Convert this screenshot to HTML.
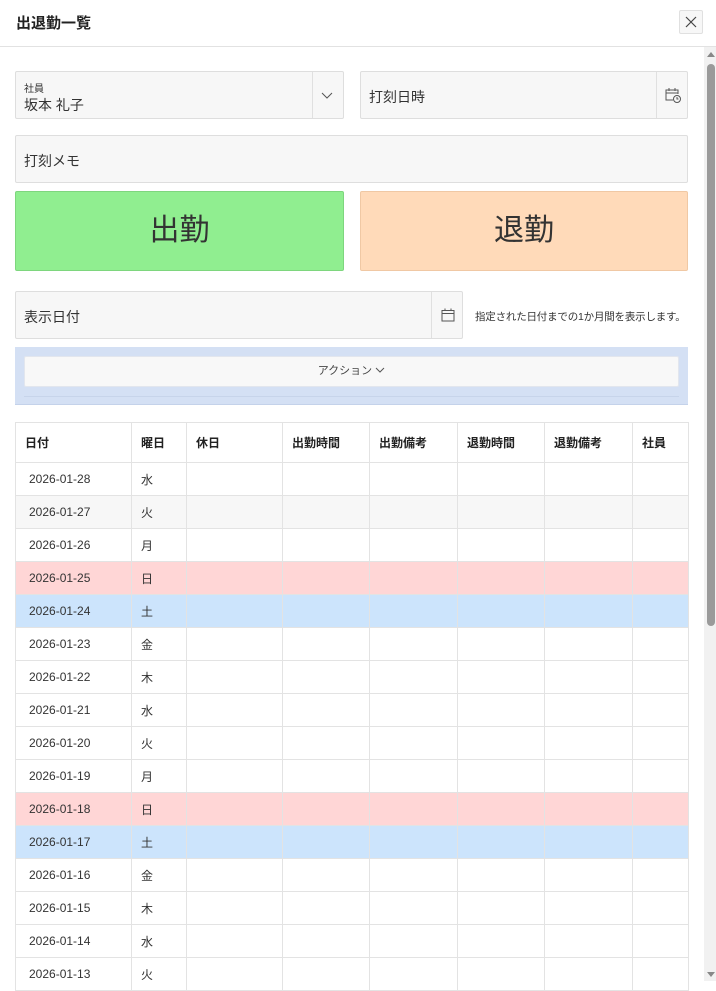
<!DOCTYPE html>
<html><head><meta charset="utf-8"><style>
*{box-sizing:border-box;margin:0;padding:0}
body{width:716px;height:981px;overflow:hidden;background:#fff;font-family:"Liberation Sans","Noto Sans CJK JP",sans-serif;color:#262626;position:relative}
.abs{position:absolute}
.box{position:absolute;background:#f7f7f7;border:1px solid #dedede;border-radius:2px}
.lbl{font-size:14px;color:#333}
table{border-collapse:collapse;position:absolute;left:15px;top:422px;width:673px;font-size:12px;table-layout:fixed}
td,th{border:1px solid #e3e3e3;height:33px;padding:0 9px;text-align:left;font-weight:normal;color:#333}
th{height:40px;font-weight:bold;font-size:12px;color:#222;border-top:1px solid #e3e3e3}
td:first-child{padding-left:13px}
tr.s td{background:#ffd6d6}tr.b td{background:#cce4fc}tr.g td{background:#f7f7f7}
</style></head><body>
<div class="abs" style="left:16px;top:12px;font-size:15px;font-weight:bold;color:#222">出退勤一覧</div>
<div class="abs" style="left:679px;top:10px;width:24px;height:24px;border:1px solid #e0e0e0;background:#f7f7f7;border-radius:2px">
<svg width="22" height="22" viewBox="0 0 22 22"><path d="M6 6L16 16M16 6L6 16" stroke="#444" stroke-width="1.2"/></svg></div>
<div class="abs" style="left:0;top:46px;width:716px;height:1px;background:#e2e2e2"></div>
<div class="abs" style="left:704px;top:47px;width:12px;height:934px;background:#f1f1f1"></div>
<div class="abs" style="left:707px;top:64px;width:8px;height:562px;background:#9a9a9a;border-radius:4px"></div>
<svg class="abs" style="left:706px;top:50px" width="10" height="8"><path d="M1 7L5 2L9 7Z" fill="#888"/></svg>
<svg class="abs" style="left:706px;top:971px" width="10" height="8"><path d="M1 1L5 6L9 1Z" fill="#888"/></svg>

<div class="box" style="left:15px;top:71px;width:329px;height:48px">
<div class="abs" style="left:8px;top:8px;font-size:10px;color:#333">社員</div>
<div class="abs lbl" style="left:8px;top:23px">坂本 礼子</div>
<div class="abs" style="left:296px;top:0;width:1px;height:46px;background:#e0e0e0"></div>
<svg class="abs" style="left:305px;top:18px" width="12" height="10"><path d="M1 3L6 8L11 3" stroke="#555" fill="none"/></svg>
</div>
<div class="box" style="left:360px;top:71px;width:328px;height:48px">
<div class="abs lbl" style="left:8px;top:15px">打刻日時</div>
<div class="abs" style="left:295px;top:0;width:1px;height:46px;background:#e0e0e0"></div>
<svg class="abs" style="left:303px;top:14px" width="18" height="18" viewBox="0 0 18 18"><path d="M9 14H2V4H14V8M2 7H14M5 2V5M11 2V5" stroke="#555" fill="none"/><circle cx="13" cy="13" r="3.5" stroke="#555" fill="none"/><path d="M13 11V13H14.5" stroke="#555" fill="none"/></svg>
</div>
<div class="box" style="left:15px;top:135px;width:673px;height:48px">
<div class="abs lbl" style="left:8px;top:15px">打刻メモ</div></div>
<div class="abs" style="left:15px;top:191px;width:329px;height:80px;background:#90ee90;border:1px solid #7ed67e;border-radius:2px;font-size:30px;color:#333;text-align:center;line-height:78px">出勤</div>
<div class="abs" style="left:360px;top:191px;width:328px;height:80px;background:#ffdab9;border:1px solid #f0c8a4;border-radius:2px;font-size:30px;color:#333;text-align:center;line-height:78px">退勤</div>

<div class="box" style="left:15px;top:291px;width:448px;height:48px">
<div class="abs lbl" style="left:8px;top:15px">表示日付</div>
<div class="abs" style="left:415px;top:0;width:1px;height:46px;background:#e0e0e0"></div>
<svg class="abs" style="left:424px;top:15px" width="16" height="16" viewBox="0 0 16 16"><path d="M2 3.5H14V14H2ZM2 6.5H14M5 1.5V4M11 1.5V4" stroke="#555" fill="none"/></svg>
</div>
<div class="abs" style="left:475px;top:309px;font-size:10.5px;color:#333;letter-spacing:-0.2px">指定された日付までの1か月間を表示します。</div>

<div class="abs" style="left:15px;top:347px;width:673px;height:58px;background:#d4e0f4;border-bottom:1px solid #c4d2ea"></div>
<div class="abs" style="left:24px;top:356px;width:655px;height:31px;background:#f8f8f8;border:1px solid #e2e6ee;border-radius:2px;font-size:11px;color:#444;text-align:center;line-height:29px">アクション <svg width="10" height="8"><path d="M1 2L5 6L9 2" stroke="#555" fill="none"/></svg></div>
<div class="abs" style="left:24px;top:396px;width:655px;height:1px;background:#c7d4ea"></div>

<table>
<colgroup><col style="width:116px"><col style="width:55px"><col style="width:96px"><col style="width:87px"><col style="width:88px"><col style="width:87px"><col style="width:88px"><col style="width:56px"></colgroup>
<tr><th>日付</th><th>曜日</th><th>休日</th><th>出勤時間</th><th>出勤備考</th><th>退勤時間</th><th>退勤備考</th><th>社員</th></tr>
<tr><td>2026-01-28</td><td>水</td><td></td><td></td><td></td><td></td><td></td><td></td></tr>
<tr class="g"><td>2026-01-27</td><td>火</td><td></td><td></td><td></td><td></td><td></td><td></td></tr>
<tr><td>2026-01-26</td><td>月</td><td></td><td></td><td></td><td></td><td></td><td></td></tr>
<tr class="s"><td>2026-01-25</td><td>日</td><td></td><td></td><td></td><td></td><td></td><td></td></tr>
<tr class="b"><td>2026-01-24</td><td>土</td><td></td><td></td><td></td><td></td><td></td><td></td></tr>
<tr><td>2026-01-23</td><td>金</td><td></td><td></td><td></td><td></td><td></td><td></td></tr>
<tr><td>2026-01-22</td><td>木</td><td></td><td></td><td></td><td></td><td></td><td></td></tr>
<tr><td>2026-01-21</td><td>水</td><td></td><td></td><td></td><td></td><td></td><td></td></tr>
<tr><td>2026-01-20</td><td>火</td><td></td><td></td><td></td><td></td><td></td><td></td></tr>
<tr><td>2026-01-19</td><td>月</td><td></td><td></td><td></td><td></td><td></td><td></td></tr>
<tr class="s"><td>2026-01-18</td><td>日</td><td></td><td></td><td></td><td></td><td></td><td></td></tr>
<tr class="b"><td>2026-01-17</td><td>土</td><td></td><td></td><td></td><td></td><td></td><td></td></tr>
<tr><td>2026-01-16</td><td>金</td><td></td><td></td><td></td><td></td><td></td><td></td></tr>
<tr><td>2026-01-15</td><td>木</td><td></td><td></td><td></td><td></td><td></td><td></td></tr>
<tr><td>2026-01-14</td><td>水</td><td></td><td></td><td></td><td></td><td></td><td></td></tr>
<tr><td>2026-01-13</td><td>火</td><td></td><td></td><td></td><td></td><td></td><td></td></tr>
</table>
</body></html>
